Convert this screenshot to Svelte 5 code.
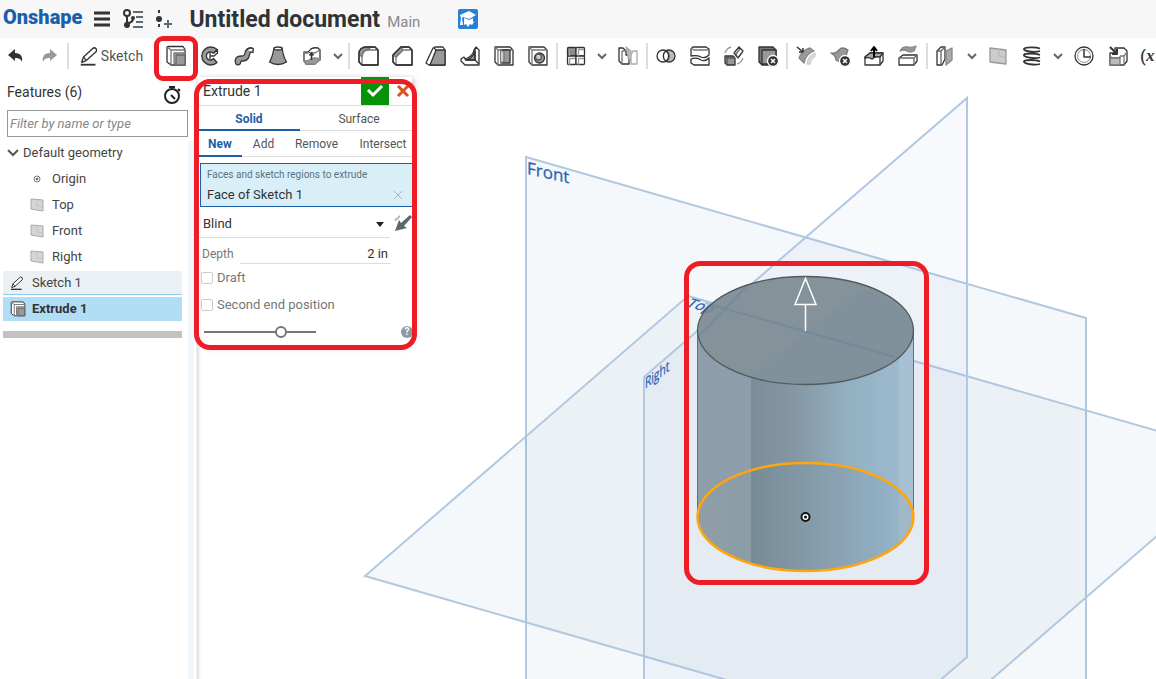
<script>
  const ink = '#333';

  const icons = {
    undo: '<path d="M4 11l7-6v4c6 0 8 4 7 9-1-3-3-4-7-4v3z" fill="#333"/>',
    redo: '<path d="M20 11l-7-6v4c-6 0-8 4-7 9 1-3 3-4 7-4v3z" fill="#999"/>',
    extrude: '<path d="M3 3.500q0-1 1-1h15l2 3v15.500H7l-4-3z" fill="#fff"/><path d="M7 6h14M7 6v15M3 3l4 3" stroke="#777"/><path d="M10 9h11v12H12l-2-2z" fill="#bbb" stroke="#777"/><path d="M12 11h9v10h-9z" fill="#999" stroke="#666"/>',
    revolve: '<path d="M19 5.500A9 9 0 1 0 19 18.500l-3.500-4a4 4 0 1 1 0-5z" fill="#999"/><path d="M12 9v6M12 12h4l3.500-3V5.500L15.500 9.500" fill="#fff"/>',
    sweep: '<path d="M3.500 19c-1-5 1-7 6-7 4 0 3-2 4-5s6-3.500 7.500-2.500v4c-3-1-3 0-4 4-1 4-4 4.500-7 4.500-2 0-1 2-2 3-1.500 1.500-4 1-4.500-1z" fill="#999"/><path d="M15 6q2-3 6-1.500v3" fill="#fff"/>',
    loft: '<path d="M8 4h8c1 7 2 10 4.500 14q-8.500 5-17 0C6 14 7 10 8 4z" fill="#999"/><ellipse cx="12" cy="4.500" rx="4" ry="1.500" fill="#fff"/>',
    thicken: '<path d="M4 8q4 1 6-2t8-2l2 2v10q-3 1-5 4H6l-2-3z" fill="#fff"/><path d="M4 17q4 0 7-2t9 0v1l-5 4H6z" fill="#999" stroke="#888"/><path d="M4 8q2 2 4 1t7 0M15 9l5-3" stroke="#777"/><path d="M11.500 16V9m-2 2.500l2-2.500 2 2.500" stroke-width="1.500"/>',
    fillet: '<path d="M3 10q0-7 8-7h8l3 3v15H6l-3-3z" fill="#fff"/><path d="M3 10q0-7 8-7l3 2q-7 0-8 8z" fill="#999" stroke="#777"/><path d="M6 21v-9q0-6 7-6h9" stroke="#777"/><path d="M3 18v-8q0-7 8-7h8l3 3v15H6z"/>',
    chamfer: '<path d="M3 11l8-8h8l3 3v15H6l-3-3z" fill="#fff"/><path d="M3 11l8-8 2 3-7 7z" fill="#999" stroke="#777"/><path d="M6 21v-8l7-7h9" stroke="#777"/><path d="M3 18v-7l8-8h8l3 3v15H6z"/>',
    draft: '<path d="M2 19L9 4l2-1h8l2 3v15H5z" fill="#fff"/><path d="M6 21l6-15h9v15z" fill="#999"/><path d="M10 4l2 2"/>',
    rib: '<path d="M3 15l3-2 1 2q8-3 9-9l2-3 3 3v15H7l-4-4z" fill="#fff"/><path d="M8 16q7-2 9-9v9z" fill="#999"/><path d="M17 4v12l4 4M17 16H7"/>',
    shell: '<path d="M3 3h15l3 3v15H6l-3-3z" fill="#fff"/><path d="M6 6h15M6 6v15M3 3l3 3" stroke="#777"/><path d="M9 6h9v13H9z" fill="#999"/><path d="M9 6l3 2v9l-3 2" fill="#ccc" stroke="#777"/>',
    hole: '<path d="M3 3h15l3 3v15H6l-3-3z" fill="#fff"/><path d="M6 6h15M6 6v15M3 3l3 3" stroke="#777"/><circle cx="13.500" cy="14" r="5" fill="#999"/><circle cx="12.500" cy="13" r="3" fill="#ccc" stroke="#555"/>',
    pattern: '<rect x="3.500" y="3.500" width="8.500" height="8.500" rx="1" fill="#888"/><rect x="12" y="3.500" width="8.500" height="8.500" rx="1" fill="#fff"/><rect x="3.500" y="12" width="8.500" height="8.500" rx="1" fill="#fff"/><rect x="12" y="12" width="8.500" height="8.500" rx="1" fill="#fff"/><path d="M5 5.500h6M5.500 6v6M14 5.500h6M14.500 6v6M5 14.500h6M5.500 15v6M14 14.500h6M14.500 15v6" stroke="#999"/>',
    mirror: '<path d="M3 4h4l3 3v4h3v9H6l-3-3z" fill="#fff"/><path d="M6 7h4M6 7v13" stroke="#777"/><path d="M10 3l5 4v10l-3-3V9z" fill="#bbb" stroke="#aaa"/><path d="M15 11l2-4h4v13h-6z" fill="#fff" stroke="#aaa"/>',
    boolean: '<circle cx="15" cy="12" r="6" fill="#bbb"/><circle cx="9" cy="12" r="6" fill="#fff"/><path d="M12 7a6 6 0 0 1 0 10 6 6 0 0 1 0-10z" fill="#fff"/>',
    split: '<path d="M3 5l2-2h13l3 2v6q-4 4-8 2-4-2-10-1z" fill="#fff"/><path d="M3 15q6-2 10 1 4 2 8-2v7H6l-3-2z" fill="#fff"/><path d="M3 4l3 2h14" stroke="#777"/>',
    transform: '<path d="M3 12h8l2 2v7H5l-2-2z" fill="#999"/><path d="M12 9l5-6 4 4-5 7z" fill="#fff"/><path d="M3 12l2 2h8M5 14v7" stroke="#555"/><path d="M12 9l2 1 2 4M14 10l4-5" stroke="#666"/><path d="M3 9q2-5 6-6M21 14q-2 5-6 6" stroke="#999"/>',
    deletepart: '<path d="M3 3h14l3 3v15H6l-3-3z" fill="#777"/><path d="M6 6h14v14H6z" fill="#999"/><circle cx="17" cy="17" r="5.500" fill="#333" stroke="#fff"/><path d="M15 15l4 4m0-4l-4 4" stroke="#fff" stroke-width="1.500"/>',
    modify: '<path d="M5 14q3-8 11-10l4 3q-8 3-10 12z" fill="#999" stroke="#888"/><path d="M13 20q1-8 8-11v3q-4 3-5 8z" fill="#ddd" stroke="#ccc"/><path d="M3 3l6 5M9 4v4H5" stroke-width="1.500"/>',
    deleteface: '<path d="M3 9q5 1 8-3t9 0q-2 6-4 10t-8 0q0-4-5-7z" fill="#999" stroke="#777"/><circle cx="17" cy="17" r="5.500" fill="#333" stroke="#fff"/><path d="M15 15l4 4m0-4l-4 4" stroke="#fff" stroke-width="1.500"/>',
    moveface: '<path d="M3 13l5-4h13v8l-3 4H3z" fill="#fff"/><path d="M3 13l5-4h13l-3 4q-5-1-8 2-3-2-7-1z" fill="#aaa"/><path d="M18 13v8"/><path d="M12 13V4m-3 3l3-4 3 4" stroke="#000" stroke-width="2"/>',
    replace: '<path d="M3 14l4-3h14v6l-3 4H3z" fill="#fff"/><path d="M3 14h15v7M18 14l3-3" stroke="#666"/><path d="M4 7q3-5 7-4t9-1l-2 5q-4 2-7 0t-7 0z" fill="#999" stroke="#888"/>',
    planesplit: '<path d="M3 7l4-4h4v12l-3 6H3z" fill="#fff"/><path d="M3 7h4l4-4M7 7v13" stroke="#666"/><path d="M12 7l6-3v12l-6 5z" fill="#aaa" stroke="#888"/>',
    plane: '<path d="M4 4l16 2v14L4 18z" fill="#ccc" stroke="#999"/><path d="M13 5v7l7 1" stroke="#bbb"/>',
    helix: '<path d="M20 4.500C16 3 5 3 4 5s10 4 16 2M20 11C16 9 5 9 4 11s10 4 16 2.500M20 17.500C16 15.500 5 15.500 4 17.500s10 4 16 2.500" stroke-width="1.800"/>',
    measure: '<circle cx="12" cy="12" r="9" fill="#fff"/><circle cx="12" cy="12" r="6.500" stroke="#aaa"/><path d="M12 5v8h7" stroke-width="1.500"/>',
    derive: '<path d="M4 9h5V4h9l3 3v10l-3 4H4z" fill="#fff"/><path d="M14 12h4l3-4M18 12v9M4 12l2 2h8v-2" stroke="#777"/><path d="M4 14h10v7H4z" fill="#bbb" stroke="#777"/><path d="M4 3l7 7m0-5v5H6" stroke-width="2"/>',
    pencil: '<path d="M3 21.500h16" stroke-width="2"/><path d="M4 19l2-6L17 3q4 0 3 4L9 17z" fill="#fff" stroke-width="1.500"/><path d="M6 13l3 4" />'
  };

  const groups = [
    { tools: ['extrude', 'revolve', 'sweep', 'loft', 'thicken', '>'] },
    { tools: ['fillet', 'chamfer', 'draft', 'rib', 'shell', 'hole'] },
    { tools: ['pattern', '>', 'mirror'] },
    { tools: ['boolean', 'split', 'transform', 'deletepart'] },
    { tools: ['modify', 'deleteface', 'moveface', 'replace'] },
    { tools: ['planesplit', '>', 'plane', 'helix', '>', 'measure', 'derive'], last: true }
  ];

  const planes = ['Top', 'Front', 'Right'];
  const kinds = ['Solid', 'Surface'];
  const operations = ['New', 'Add', 'Remove', 'Intersect'];
  let kind = $state('Solid');
  let operation = $state('New');
  let depth = $state('2 in');
  let opacity = $state(71);
</script>

{#snippet icon(name, size = 24)}
  <svg width={size} height={size} viewBox="0 0 24 24" fill="none" stroke={name === 'undo' || name === 'redo' ? 'none' : ink} stroke-width="1.3" stroke-linejoin="round" aria-hidden="true">{@html icons[name]}</svg>
{/snippet}

<div class="app">
  <header>
    <a class="logo" href="#home">Onshape</a>
    <button aria-label="Menu"><svg width="18" height="18" viewBox="0 0 18 18" stroke="#333" stroke-width="3"><path d="M1 3h16M1 9h16M1 15h16" /></svg></button>
    <button aria-label="Versions and history">
      <svg width="22" height="20" viewBox="0 0 22 20" fill="none" stroke="#333" stroke-width="2"><circle cx="5" cy="4" r="3" /><path d="M5 7v8M5 14q6 0 6-5" /><circle cx="5" cy="16" r="2" fill="#333" /><circle cx="11" cy="9" r="1" fill="#333" /><path d="M11 3h10M14 8h7M14 13h7M11 18h10" stroke="#5b6b7a" /></svg>
    </button>
    <button aria-label="Create version">
      <svg width="18" height="20" viewBox="0 0 18 20" fill="#333"><circle cx="4" cy="10" r="3" /><path d="M3 1h2v3H3zM3 15h2v3H3z" /><path d="M13 11v8M9 15h8" stroke="#5b6b7a" stroke-width="2" /></svg>
    </button>
    <h1>Untitled document</h1>
    <span class="branch">Main</span>
    <button aria-label="Learning center">
      <svg width="20" height="20" viewBox="0 0 20 20"><rect width="20" height="20" rx="2" fill="#2480dc" /><path d="M11 2l7 4-7 4-6-2-1 1 1 7H2l1-7-1-3zM6 9l5 2 4-2v3l1 1-2 3-2-1-2 3-2-3-2 1z" fill="#fff" /></svg>
    </button>
  </header>

  <nav class="toolbar" aria-label="Feature tools">
    <button class="tool undo" aria-label="Undo">{@render icon('undo')}</button>
    <button class="tool" aria-label="Redo">{@render icon('redo')}</button>
    <i class="sep"></i>
    <button class="sketch">{@render icon('pencil', 22)}Sketch</button>
    {#each groups as group}
      {#each group.tools as tool}
        {#if tool === '>'}
          <button class="more" aria-label="More tools">
            <svg width="12" height="8" viewBox="0 0 12 8" fill="none" stroke="#666" stroke-width="2"><path d="M2 2l4 4 4-4" /></svg>
          </button>
        {:else}
          <button class="tool" class:marked={tool === 'extrude'} aria-label={tool}>{@render icon(tool)}</button>
        {/if}
      {/each}
      {#if !group.last}<i class="sep"></i>{/if}
    {/each}
    <button class="variable" aria-label="Variable">(<em>x</em></button>
  </nav>

  <main>
    <aside>
      <div class="title">
        <h2>Features (6)</h2>
        <button aria-label="Regeneration times">
          <svg width="18" height="20" viewBox="0 0 18 20" fill="none" stroke="#222" stroke-width="2"><circle cx="9" cy="11" r="7" /><path d="M6 2h6M9 2v2M15 4l2 2M8 10l4 4" /></svg>
        </button>
      </div>
      <input class="filter" type="text" placeholder="Filter by name or type" aria-label="Filter by name or type" />
      <ul>
        <li class="group"><svg width="12" height="8" viewBox="0 0 12 8" fill="none" stroke="#555" stroke-width="2"><path d="M1 1l5 5 5-5" /></svg>Default geometry</li>
        <li class="child"><svg width="14" height="14" viewBox="0 0 14 14" fill="none" stroke="#777"><circle cx="7" cy="7" r="3" /><circle cx="7" cy="7" r="1" fill="#333" /></svg>Origin</li>
        {#each planes as plane}
          <li class="child"><svg width="14" height="14" viewBox="0 0 14 14" fill="#d5d5d5" stroke="#aaa"><path d="M1 1l12 1v11L1 11z" /><path d="M7 2v6l6 1" stroke="#c4c4c4" /></svg>{plane}</li>
        {/each}
        <li class="feature">{@render icon('pencil', 16)}Sketch 1</li>
        <li class="feature selected">{@render icon('extrude', 18)}Extrude 1</li>
      </ul>
      <div class="rollback"></div>
    </aside>

    <section class="view" aria-label="Model view">
      <svg class="scene" width="968" height="605" viewBox="188 74 968 605">
        <defs>
          <linearGradient id="side" x1="697" x2="914" y1="0" y2="0" gradientUnits="userSpaceOnUse">
            <stop offset="0" stop-color="#8d9dab" /><stop offset=".25" stop-color="#8e9fac" />
            <stop offset=".25" stop-color="#7a8d99" /><stop offset=".45" stop-color="#8497a3" />
            <stop offset=".7" stop-color="#93b0c2" /><stop offset=".93" stop-color="#9cb9ce" />
            <stop offset=".93" stop-color="#a9c0d2" /><stop offset="1" stop-color="#a6bfd2" />
          </linearGradient>
          <linearGradient id="base" x1="697" x2="914" y1="0" y2="0" gradientUnits="userSpaceOnUse">
            <stop offset="0" stop-color="#8f9ea7" /><stop offset=".25" stop-color="#8c9ca5" />
            <stop offset=".25" stop-color="#778b96" /><stop offset=".6" stop-color="#889fae" />
            <stop offset=".93" stop-color="#94b4ca" /><stop offset=".93" stop-color="#a1b8c9" /><stop offset="1" stop-color="#a0b7c8" />
          </linearGradient>
        </defs>
        <g fill="#5087b0" fill-opacity=".06" stroke="#b1c8e2" stroke-width="2">
          <path d="M526 157l560 161v560L526 717z" />
          <path d="M688 296l560 161-323 280L365 576z" />
          <path d="M644 377L967 98v559L644 936z" fill="#7898d8" />
        </g>
        <g class="plane-label">
          <text transform="matrix(1 .22 0 1 527 174)" font-size="17">Front</text>
          <text transform="matrix(.68 -.52 0 1 645 389)" font-size="15">Right</text>
          <text transform="matrix(.96 .28 -.7 .7 685 306)" font-size="15">Top</text>
        </g>
        <path d="M697 330v187a108 54 0 0 0 217 0V330z" fill="url(#side)" />
        <ellipse cx="805.500" cy="517" rx="108" ry="54" fill="url(#base)" />
        <path d="M697.500 330v187M913.500 330v187" stroke="#64727d" />
        <ellipse cx="805.500" cy="330.500" rx="108" ry="54" fill="#84929a" />
        <path d="M751 377L862 289q51 17 51 42c0 29-48 53-108 53q-30 0-54-7z" fill="#80919b" />
        <path d="M698 337L747 286M705 303l194 55" stroke="#63809b" stroke-width="2" opacity=".4" />
        <g class="plane-label" opacity=".25"><text transform="matrix(.96 .28 -.7 .7 685 306)" font-size="15">Top</text></g>
        <ellipse cx="805.500" cy="330.500" rx="108" ry="54" fill="none" stroke="#535a5f" stroke-width="1.300" />
        <ellipse cx="805.500" cy="517" rx="108" ry="54" fill="none" stroke="#ffa60c" stroke-width="2.500" />
        <path d="M805.500 331v-26M795 304.500h21l-10.500-26z" fill="none" stroke="#fff" stroke-width="1.500" />
        <circle cx="805.500" cy="517" r="4" fill="#fff" stroke="#111" stroke-width="2" /><circle cx="805.500" cy="517" r="1.500" fill="#111" />
        <rect x="686.500" y="263.500" width="240" height="319" rx="14" fill="none" stroke="#ee1c25" stroke-width="5" />
      </svg>

      <form class="dialog" onsubmit={(e) => e.preventDefault()}>
        <div class="head">
          <span>Extrude 1</span>
          <button class="ok" aria-label="Accept"><svg width="18" height="14" viewBox="0 0 18 14" fill="none" stroke="#fff" stroke-width="3"><path d="M2 6l5 5 9-9" /></svg></button>
          <button class="cancel" type="button" aria-label="Cancel"><svg width="14" height="14" viewBox="0 0 14 14" stroke="#df5024" stroke-width="3"><path d="M2 2l10 10M12 2L2 12" /></svg></button>
        </div>
        <div class="tabs kinds">
          {#each kinds as name}<button type="button" class:on={kind === name} onclick={() => (kind = name)}>{name}</button>{/each}
        </div>
        <div class="tabs">
          {#each operations as name}<button type="button" class:on={operation === name} onclick={() => (operation = name)}>{name}</button>{/each}
        </div>
        <div class="picker">
          <small>Faces and sketch regions to extrude</small>
          <div class="pick">
            <span>Face of Sketch 1</span>
            <button type="button" aria-label="Remove face"><svg width="8" height="8" viewBox="0 0 8 8" stroke="#a5b5bd"><path d="M0 0l8 8M8 0L0 8" /></svg></button>
          </div>
        </div>
        <div class="end">
          <div class="choice">
            <select aria-label="End type"><option>Blind</option></select>
            <svg width="8" height="5" viewBox="0 0 8 5"><path d="M0 0h8L4 5z" fill="#222" /></svg>
          </div>
          <button type="button" aria-label="Opposite direction"><svg width="18" height="18" viewBox="0 0 18 18" fill="#5c6870"><path d="M1 17L5 6l2 3 9-8 2 2-8 9 3 2z" /><path d="M0 6l6-5v2L2 7z" fill="#aab4bb" /></svg></button>
        </div>
        <div class="depth"><label for="depth">Depth</label><input id="depth" type="text" bind:value={depth} /></div>
        <label class="check"><input type="checkbox" />Draft</label>
        <label class="check"><input type="checkbox" />Second end position</label>
        <div class="foot">
          <input type="range" min="0" max="100" bind:value={opacity} aria-label="Preview opacity" />
          <button type="button" class="help" aria-label="Help">?</button>
        </div>
      </form>
    </section>
  </main>
</div>

<style>
  :global(body) { margin: 0; }
  .app { display: flex; flex-direction: column; height: 100vh; overflow: hidden; background: #fff; color: #333; font: 14px/20px Roboto, "Liberation Sans", sans-serif; }
  button, input, select { margin: 0; font: inherit; color: inherit; box-sizing: border-box; }
  button { display: flex; align-items: center; justify-content: center; padding: 0; border: 0; background: none; }
  svg { flex: none; }
  h1, h2, ul { margin: 0; padding: 0; }

  header { display: flex; align-items: center; flex: none; gap: 11px; height: 38px; padding-left: 3px; background: #f7f7f7; }
  .logo { align-self: flex-start; color: #1b5faa; font-size: 20px; font-weight: 900; line-height: 34px; text-decoration: none; }
  h1 { margin-left: 5px; padding-top: 2px; font-size: 23px; font-weight: 700; color: #2f3335; }
  .branch { margin: 6px 27px 0 -4px; font-size: 15px; color: #888; }

  .toolbar { position: relative; z-index: 1; display: flex; align-items: center; flex: none; height: 36px; }
  .tool { flex: none; width: 34px; height: 36px; }
  .undo { width: 32px; }
  .sep { flex: none; width: 2px; height: 26px; margin: 0 1px; background: #ddd; }
  .sketch { flex: none; gap: 1px; width: 89px; height: 36px; padding-right: 8px; color: #555; }
  .more { flex: none; width: 18px; height: 36px; }
  .marked { position: relative; }
  .marked::after { content: ""; position: absolute; inset: -2px -5px -7px; border: 5px solid #ee1c25; border-radius: 9px; }
  .variable { flex: none; margin-left: 5px; font-size: 17px; font-weight: 500; }
  .variable em { font-family: "Liberation Serif", serif; font-weight: 700; }

  main { display: flex; flex: 1; min-height: 0; }
  aside { flex: none; width: 188px; }
  .title { display: flex; align-items: center; justify-content: space-between; height: 36px; padding: 0 7px; }
  .title button { align-self: flex-end; padding-bottom: 5px; }
  h2 { font-size: 14px; font-weight: 400; }
  .filter { display: block; width: 181px; height: 27px; margin: 0 0 3px 7px; padding: 0 2px; border: 1px solid #999; outline: 0; font-size: 13px; }
  .filter::placeholder { color: #888; font-style: italic; }
  ul { list-style: none; font-size: 13px; }
  li { display: flex; align-items: center; height: 26px; color: #444; }
  .group { gap: 4px; padding-left: 7px; }
  .child { gap: 8px; padding-left: 30px; }
  .feature { gap: 7px; height: 23px; margin: 1px 6px 0 3px; padding-left: 6px; border-bottom: 1px solid #8fcaf0; background: #ebf0f4; }
  .selected { gap: 5px; height: 24px; margin-top: 2px; border: 0; background: #b1ddf5; font-weight: 700; color: #333; }
  .rollback { height: 7px; margin: 10px 6px 0 3px; background: #c2c2c2; }

  .view { position: relative; flex: 1; min-width: 0; overflow: hidden; background: linear-gradient(to right, #f2f7fb 6px, #fff 6px, #fff 8px, #ddd 9px, #fff 13px) 0 67px no-repeat; }
  .scene { position: absolute; top: 0; left: 0; }
  .plane-label { fill: #2b62b4; stroke: #2b62b4; stroke-width: 0.3px; font-family: "Open Sans", sans-serif; }

  .dialog { position: absolute; top: 3px; left: 10px; width: 214px; border-radius: 0 0 10px 10px; background: #fff; box-shadow: 1px 2px 6px #0005; font-size: 12px; }
  .dialog::after { content: ""; position: absolute; inset: 2px -5px -5px -4px; border: 5px solid #ee1c25; border-radius: 16px; pointer-events: none; }
  .head { display: flex; align-items: center; height: 28px; padding-left: 5px; border-bottom: 1px solid #ddd; font-size: 14px; }
  .head span { flex: 1; }
  .ok { width: 28px; height: 28px; background: #079307; }
  .cancel { width: 23px; height: 28px; padding-left: 4px; }
  .tabs { display: grid; grid-template-columns: 44px 43px 63px 1fr; height: 26px; box-sizing: border-box; border-bottom: 1px solid #ddd; }
  .kinds { grid-template-columns: 102px 1fr; height: 25px; }
  .tabs button { margin-bottom: -1px; padding-top: 2px; border-bottom: 2px solid transparent; color: #555; }
  .tabs button:last-child { padding-left: 6px; }
  .tabs .on { color: #1b5faa; border-color: #1b5faa; font-weight: 700; }
  .picker { height: 44px; box-sizing: border-box; margin: 6px 0 0 2px; padding: 1px 10px 0 6px; border: 1px solid #1b5faa; border-right: 0; background: #d9eff8; }
  small { display: block; font-size: 10px; color: #5b7280; }
  .pick { display: flex; justify-content: space-between; font-size: 13px; }
  .end { display: flex; gap: 4px; height: 31px; }
  .choice { display: flex; align-items: center; width: 193px; box-sizing: border-box; padding: 4px 6px 0 5px; border-bottom: 1px solid #ddd; font-size: 13px; }
  select { flex: 1; padding: 0; border: 0; outline: 0; appearance: none; background: none; }
  .depth { display: flex; align-items: center; gap: 6px; height: 26px; padding: 0 21px 0 4px; color: #777; }
  .depth label { padding-top: 5px; }
  .depth input { flex: 1; min-width: 0; height: 26px; padding: 6px 3px 0 0; border: 0; border-bottom: 1px solid #ddd; outline: 0; color: #333; font-size: 13px; text-align: right; }
  .check { display: flex; align-items: center; gap: 4px; height: 27px; padding-left: 3px; font-size: 13px; color: #777; }
  .check input { appearance: none; width: 12px; height: 12px; border: 1px solid #ccc; border-radius: 2px; }
  .foot { display: flex; align-items: center; justify-content: space-between; height: 27px; padding-left: 6px; }
  .foot input { appearance: none; width: 112px; height: 12px; background: linear-gradient(#777, #777) center / 100% 2px no-repeat; }
  .foot input::-webkit-slider-thumb { appearance: none; width: 12px; height: 12px; border: 2px solid #777; border-radius: 50%; background: #fff; }
  .help { width: 12px; height: 12px; margin-right: -1px; border-radius: 50%; background: #8d98a3; color: #fff; font-size: 10px; font-weight: 700; }
</style>
